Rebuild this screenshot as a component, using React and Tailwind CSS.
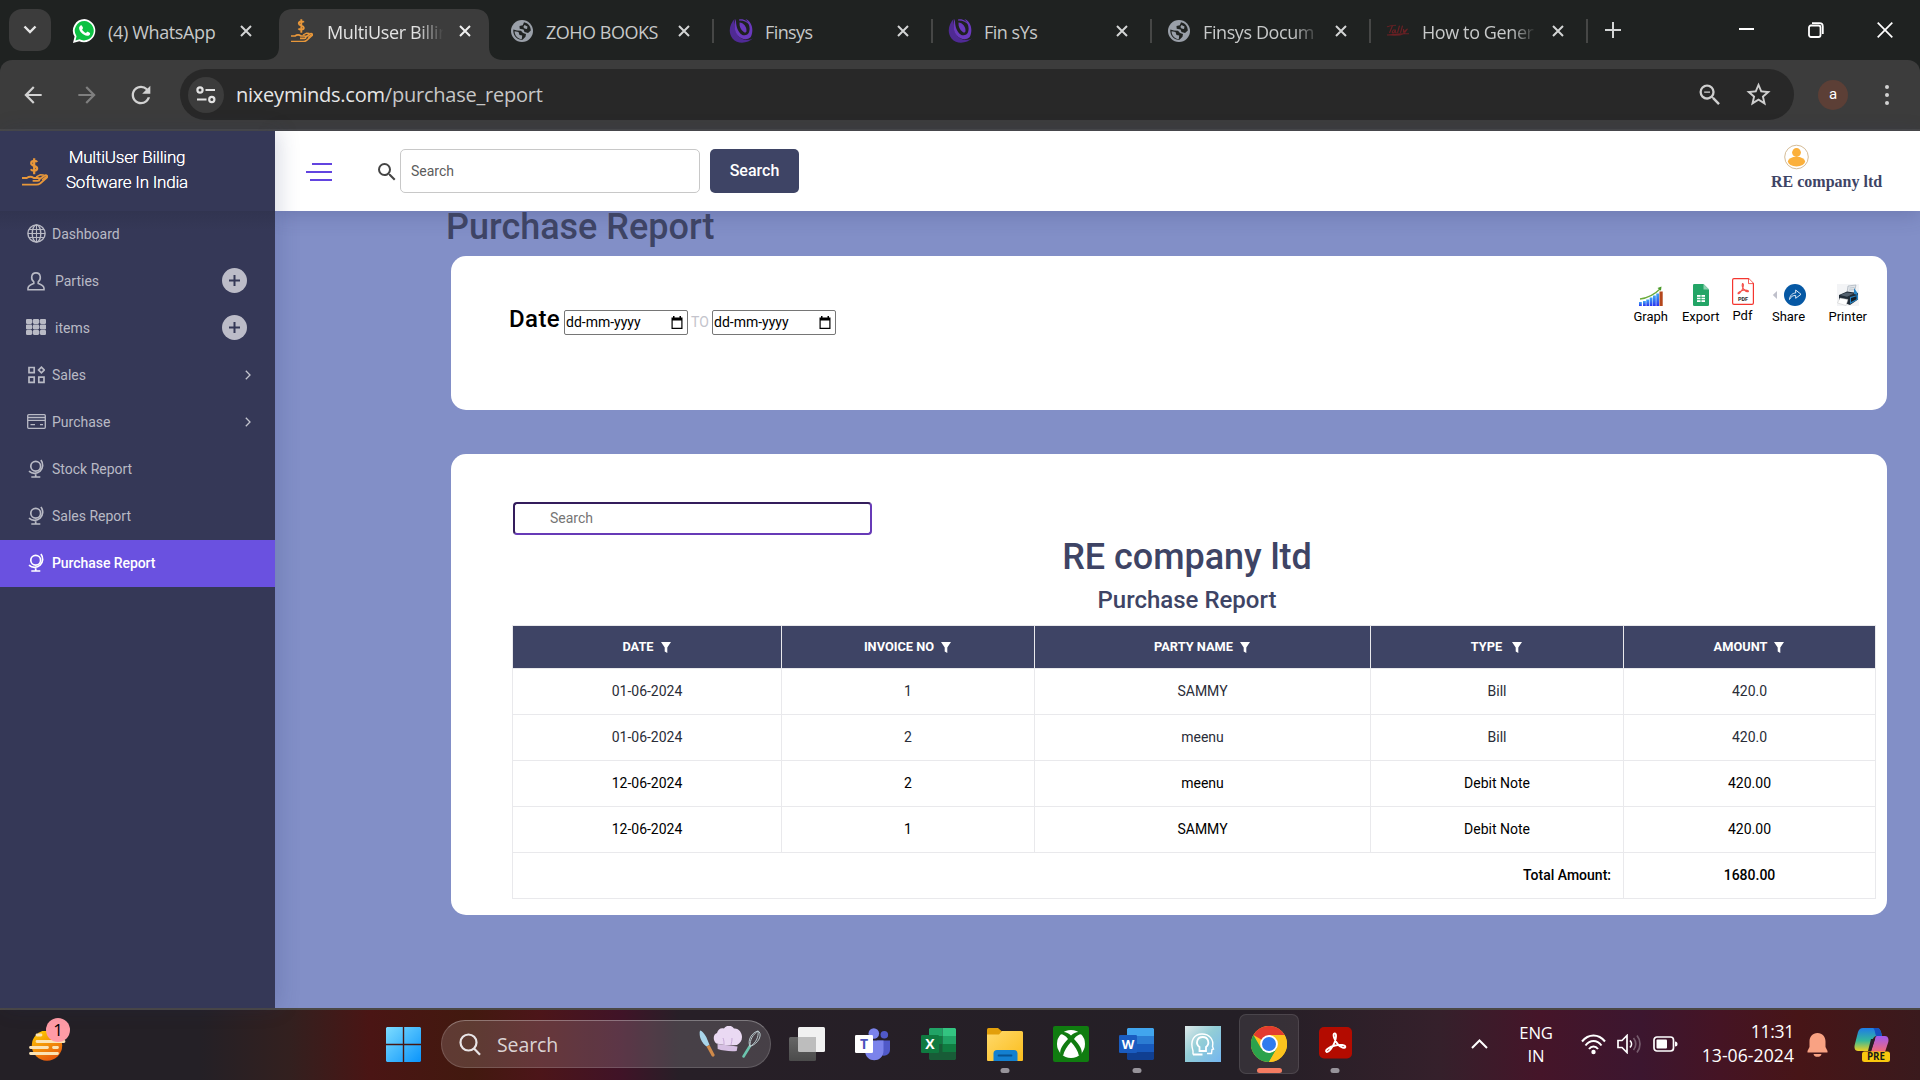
import React from "react";
import { MdSearch, MdRefresh, MdArrowBack, MdArrowForward, MdStarBorder, MdZoomOut } from "react-icons/md";

const SEGOE = "font-['Open_Sans',sans-serif]";

/* ---------- favicons ---------- */

function WhatsAppIcon() {
  return (
    <svg width="25" height="26" viewBox="0 0 25 26" className="block">
      <path d="M12.5 1A11.6 11.6 0 0 0 2.6 18.6L1 25l6.3-1.7A11.6 11.6 0 1 0 12.500 1Z" fill="#fff" />
      <path d="M12.500 3A9.700 9.700 0 0 0 4.500 18.200l-1 4.200 4.100-1.100A9.700 9.700 0 1 0 12.500 3Z" fill="#0dc143" />
      <path d="M8.600 7.600c.5-.4 1.200-.3 1.500.3l.8 1.700c.2.500.1.800-.3 1.300l-.5.600c.9 1.700 2.100 2.800 3.900 3.500l.9-1c.3-.3.600-.4 1-.2l1.700.9c.5.300.6.600.5 1.100-.3 1.500-1.600 2.200-3 2-4.100-.7-7.700-4.100-8-7.600 0-1 .6-2 1.500-2.600Z" fill="#fff" />
    </svg>
  );
}

function EarthIcon() {
  return (
    <svg width="22" height="22" viewBox="0 0 22 22" className="ml-[1px] block">
      <circle cx="11" cy="11" r="11" fill="#9aa0a9" />
      <path d="M13 2.300C17 3 19.800 6.500 19.800 10.500L17 13l-3.500-1-1-2.500-3.800-.8L8.500 6l3.300-.7Z" fill="#202322" />
      <path d="M2.300 9.500 6 10.500l4 .3 2 2.200 3 1-.5 2.800-3 3C6 20.300 1.800 15.500 2.300 9.500Z" fill="#202322" />
      <path d="M3.600 11.200 7.500 12l1 3 2.700.5-.4 3.500C7 19 3.500 15.700 3.600 11.200ZM13.500 5l3 1.500-.5 2.500-2.500-.5-1.200-1.500Z" fill="#9aa0a9" />
    </svg>
  );
}

function FinsysIcon() {
  return (
    <svg width="24" height="25" viewBox="0 0 24 25" className="block">
      <path d="M5.500 1C1 6-1.500 14 3.500 20.500 9 27 19.500 25 24 20.200c-4 2.300-10.300 2.500-14.500-2C5.300 13.600 5 7 5.500 1Z" fill="#4f2a94" />
      <path d="M7 .8C4.500 6 5 13 8.800 17.600c4 4.500 9.600 4.600 12.800 1.700C25 13 23.500 3.500 16.500 1c3.500 4 5 9 3.600 13-1.300 3.500-5.600 4.600-8.800 1.400C7.800 12 6.800 6 7 .8Z" fill="#6a39bd" />
      <path d="M10.500 4.500c4 0 7.500 4.500 7 8.800-.4 1.400-1.600 1.600-2.700.7-3-2-4.600-5.500-4.300-9.500Z" fill="#6a39bd" />
      <path d="M10 1.500c4-1.300 9 1.500 11.300 6C18.500 4 14.500 2.200 10 2.400Z" fill="#6a39bd" />
    </svg>
  );
}

function TallyIcon() {
  return (
    <svg width="24" height="13" viewBox="0 0 24 16" preserveAspectRatio="none" className="block" fill="none" stroke="#6b2024" strokeWidth="1.200">
      <path d="M1 3.500C5 1 8 2 10 1.500M6.500 2 3.500 11M8.500 7c-2 0-3 4-1.500 4s2-2 2.500-4c-.5 3 0 4 1 3.500M13.500 2 11.500 11M16.500 2l-2 9M17.500 6l0 4 4-4-3.500 6c-6 3-12 1.500-17 1.500 7-1 14-2 22-1.500" />
    </svg>
  );
}

function MoneyHand({ size = 22 }) {
  return (
    <svg width={size} height={size * 1.09} viewBox="0 0 22 24" className="block" fill="none" stroke="#e8973a">
      <path d="M12.800 3.400C12 2 7.800 2 7.800 4.500c0 2.700 5 1.600 5 4.300 0 2.400-4.300 2.400-5.300.7M10.300.3v13.500" strokeWidth="1.900" />
      <path d="M0 17h4c2-1.400 4-1.400 6 0h3.500c1.800 0 1.800 2.400 0 2.400H9M14.500 18l4.800-3.200c1.600-.8 2.800.8 1.500 2l-5.200 4.600c-1 .8-2 1.200-3.400 1.200H0" strokeWidth="1.600" />
      <path d="m12 16 3.500-1.800 3 .2M17 18.500l4-3" strokeWidth="1.300" />
    </svg>
  );
}

/* ---------- browser ---------- */

function CloseX({ color = "#d3d5d5" }) {
  return (
    <svg width="12" height="12" viewBox="0 0 12 12" stroke={color} strokeWidth="2" className="block">
      <path d="m1 1 10 10M11 1 1 11" />
    </svg>
  );
}

const TABS = [
  { title: "(4) WhatsApp", icon: <WhatsAppIcon />, spacing: "tracking-[-0.35px]" },
  { title: "MultiUser Billin", icon: <MoneyHand />, active: true, fade: true, spacing: "tracking-[-0.35px]" },
  { title: "ZOHO BOOKS", icon: <EarthIcon />, sep: true, spacing: "tracking-[-0.5px]" },
  { title: "Finsys", icon: <FinsysIcon />, sep: true, spacing: "tracking-[-0.6px]" },
  { title: "Fin sYs", icon: <FinsysIcon />, sep: true, spacing: "tracking-[-0.5px]" },
  { title: "Finsys Docum", icon: <EarthIcon />, sep: true, fade: true, spacing: "tracking-[-0.4px]" },
  { title: "How to Gener", icon: <TallyIcon />, sep: true, fade: true, narrow: true, spacing: "tracking-[-0.4px]" },
];

function Tab({ title, icon, active, sep, fade, narrow, spacing }) {
  return (
    <div className={`relative flex h-[60px] shrink-0 pt-[9px] ${narrow ? "w-[217px]" : "w-[219px]"}`}>
      {active && (
        <svg width="238" height="51" viewBox="0 0 238 51" className="absolute -left-[14px] top-[9px]">
          <path d="M0 51c9 0 14-5 14-13V14C14 5 19 0 28 0h182c9 0 14 5 14 14v24c0 8 5 13 14 13Z" fill="#3c3c3c" />
        </svg>
      )}
      <div className="relative flex h-[44px] w-full items-center">
        <div className="-mt-[1px] flex w-[48px] shrink-0 pl-[12px]">{icon}</div>
        <div
          className={`shrink-0 whitespace-nowrap pt-px text-[18px] leading-[26px] ${narrow ? "w-[117px]" : "w-[119px]"} ${
            fade ? "[mask-image:linear-gradient(to_right,black_76%,transparent_98%)]" : ""
          } ${active ? "text-[#e3e3e3]" : "text-[#c7c9c9]"} ${spacing}`}
        >
          {title}
        </div>
        <div className="ml-[13px]">
          <CloseX color={active ? "#f0f0f0" : "#d3d5d5"} />
        </div>
        {sep && <div className="absolute right-[3px] top-[10px] h-[24px] w-[2px] bg-[#464746]" />}
      </div>
    </div>
  );
}

function TabStrip() {
  return (
    <div className="flex h-[60px] bg-[#1f2221]">
      <div className="ml-[9px] mr-[9px] mt-[9px] flex h-[42px] w-[42px] items-center justify-center rounded-[13px] bg-[#3c3c3c]">
        <svg width="14" height="10" viewBox="0 0 14 10" fill="none" stroke="#e6e6e6" strokeWidth="2.400">
          <path d="m1.500 1.500 5.500 5.500 5.500-5.500" />
        </svg>
      </div>
      {TABS.map((t, i) => (
        <Tab key={i} {...t} />
      ))}
      <svg width="16" height="16" viewBox="0 0 16 16" stroke="#d3d5d5" strokeWidth="2" className="ml-[14px] mt-[22px]">
        <path d="M8 0v16M0 8h16" />
      </svg>
      <div className="ml-auto flex pr-[27px]">
        <div className="mt-[28px] h-[2px] w-[15px] bg-white" />
        <svg width="16" height="16" viewBox="0 0 16 16" fill="none" stroke="#fff" strokeWidth="1.800" className="ml-[54px] mt-[22px]">
          <rect x="1" y="3.500" width="11.500" height="11.500" rx="2" />
          <path d="M4 1.200h7.500c2 0 3.300 1.300 3.300 3.300v7.500" />
        </svg>
        <svg width="16" height="16" viewBox="0 0 16 16" stroke="#fff" strokeWidth="1.700" className="ml-[53px] mt-[22px]">
          <path d="m.7.7 14.600 14.600M15.300.7.7 15.300" />
        </svg>
      </div>
    </div>
  );
}

function Toolbar() {
  return (
    <div className="h-[71px] bg-[#1f2221]">
      <div className="flex h-[71px] items-center rounded-t-[12px] border-b-2 border-[#484848] bg-[#3c3c3c]">
        <MdArrowBack size={26} color="#d2d2d2" className="ml-[20px]" />
        <MdArrowForward size={26} color="#7f7f7f" className="ml-[28px]" />
        <MdRefresh size={28} color="#d2d2d2" className="ml-[27px]" />
        <div className="ml-[25px] flex h-[51px] w-[1614px] items-center rounded-full bg-[#282828]">
          <div className="ml-[8px] flex size-[36px] items-center justify-center rounded-full bg-[#3c3c3c]">
            <svg width="20" height="18" viewBox="0 0 20 18" fill="none" stroke="#e3e3e3" strokeWidth="2.200">
              <circle cx="4" cy="4" r="2.600" />
              <path d="M9.500 4H19M1 13.500h9.500" />
              <circle cx="15.800" cy="13.500" r="2.600" />
            </svg>
          </div>
          <div className="ml-[12px] pt-px text-[20px] leading-[28px] tracking-[-0.23px] text-[#e6e6e6]">
            nixeyminds.com<span className="text-[#c7c7c7]">/purchase_report</span>
          </div>
          <MdZoomOut size={28} color="#cfcfcf" className="ml-auto mr-[20px]" />
          <MdStarBorder size={29} color="#cfcfcf" className="mr-[21px]" />
        </div>
        <div className="ml-[24px] flex size-[30px] items-center justify-center rounded-full bg-[#5c3f36] font-[Roboto] text-[15px] text-white">a</div>
        <div className="ml-[37px] flex flex-col gap-[4px]">
          <div className="size-[4px] rounded-full bg-[#d2d2d2]" />
          <div className="size-[4px] rounded-full bg-[#d2d2d2]" />
          <div className="size-[4px] rounded-full bg-[#d2d2d2]" />
        </div>
      </div>
    </div>
  );
}

/* ---------- sidebar ---------- */

const GlobeIcon = () => (
  <svg width="19" height="19" viewBox="0 0 19 19" fill="none" stroke="currentColor" strokeWidth="1.400" className="-mt-[2px]">
    <circle cx="9.500" cy="9.500" r="8.600" />
    <ellipse cx="9.500" cy="9.500" rx="4.300" ry="8.600" />
    <path d="M9.500 1v17M1 9.500h17M2 5.500h15M2 13.500h15" strokeWidth="1.100" />
  </svg>
);
const PersonIcon = () => (
  <svg width="18" height="19" viewBox="0 0 18 19" fill="none" stroke="currentColor" strokeWidth="1.600" className="-mt-[1px]">
    <path d="M6.800 9.800C3.700 7.500 3.700.9 9 .9s5.300 6.600 2.200 8.900v1.700c2 .8 5.800 2.200 5.800 4.800v1.500H1v-1.500c0-2.600 3.800-4 5.800-4.800Z" />
  </svg>
);
const GridIcon = () => (
  <svg width="20" height="16" viewBox="0 0 20 16" fill="currentColor" className="-mt-[4px]">
    {[0, 5.500, 11].map((y) => [0, 7, 14].map((x) => <rect key={`${x}-${y}`} x={x - 0.2} y={y} width="6.400" height="4.900" rx="1.400" />))}
  </svg>
);
const CategoryIcon = () => (
  <svg width="17" height="18" viewBox="0 0 17 18" fill="none" stroke="currentColor" strokeWidth="1.700" className="-mt-[1px]">
    <path d="M1 1.500h5.200v5.200H1ZM1 11.200h5.200v5.200H1ZM10.800 11.200H16v5.200h-5.200ZM13.400 1.200l2.800 2.800-2.800 2.800-2.800-2.800Z" />
  </svg>
);
const CardIcon = () => (
  <svg width="19" height="15" viewBox="0 0 19 15" fill="none" stroke="currentColor" strokeWidth="1.300" className="-mt-[2px]">
    <rect x=".7" y=".7" width="17.600" height="13.600" rx="1" />
    <path d="M1 3.500h17M1 6.300h17M3.500 10.700H8M13 10.700h3" />
  </svg>
);
const StandIcon = () => (
  <svg width="17" height="19" viewBox="0 0 17 19" fill="none" stroke="currentColor" strokeWidth="1.700" className="-mt-[2px]">
    <circle cx="7.700" cy="7.300" r="4.900" />
    <path d="M12.900 1A8.200 8.200 0 0 1 1 12.200M7.700 15.200V18M3.300 18h9" />
  </svg>
);

const MENU = [
  { label: "Dashboard", Icon: GlobeIcon },
  { label: "Parties", Icon: PersonIcon, plus: true },
  { label: "items", Icon: GridIcon, plus: true },
  { label: "Sales", Icon: CategoryIcon, arrow: true },
  { label: "Purchase", Icon: CardIcon, arrow: true },
  { label: "Stock Report", Icon: StandIcon },
  { label: "Sales Report", Icon: StandIcon },
  { label: "Purchase Report", Icon: StandIcon, active: true },
];

function Sidebar() {
  return (
    <aside className="relative z-10 w-[275px] shrink-0 bg-[#353857] shadow-[4px_0_20px_rgba(40,50,100,0.18)]">
      <div className="flex h-[80px] items-center">
        <div className="ml-[22px] mt-[2px] w-[26px]">
          <MoneyHand size={26} />
        </div>
        <div className="ml-[14px] mt-[-2px] w-[130px] text-center font-[Roboto] text-[17px] font-light leading-[25px] tracking-[-0.2px] text-white [text-shadow:0_0_.5px_#fff]">
          MultiUser Billing
          <br />
          Software In India
        </div>
      </div>
      <nav className="bg-linear-to-b from-[#313450] via-[#353857] via-[5%] to-[#353857] font-[Roboto] text-[14px]">
        {MENU.map(({ label, Icon, plus, arrow, active }) => (
          <div key={label} className={`flex h-[47px] items-center ${active ? "bg-[#6a51e0] font-medium text-white" : "text-[#b9bac5]"}`}>
            <div className="ml-[26px] flex w-[20px] justify-center">
              <Icon />
            </div>
            <div className={plus ? "ml-[9px]" : active ? "ml-[6px] tracking-[-0.07px]" : "ml-[6px]"}>{label}</div>
            {plus && (
              <div className="-mt-[2px] ml-auto mr-[28px] flex size-[25px] items-center justify-center rounded-full bg-[#bcbcc8]">
                <svg width="11" height="11" viewBox="0 0 11 11" stroke="#353857" strokeWidth="2">
                  <path d="M5.500 0v11M0 5.500h11" />
                </svg>
              </div>
            )}
            {arrow && (
              <svg width="6" height="10" viewBox="0 0 6 10" fill="none" stroke="#c3c4ce" strokeWidth="1.300" className="-mt-[1px] ml-auto mr-[24px]">
                <path d="m.8.8 4.200 4.200L.8 9.200" />
              </svg>
            )}
          </div>
        ))}
      </nav>
    </aside>
  );
}

/* ---------- page ---------- */

function PageHeader() {
  return (
    <header className="relative flex h-[80px] items-center bg-white font-[Roboto] shadow-[0_4px_18px_rgba(50,60,110,0.25)]">
      <div className="ml-[31px] mt-[1px] flex w-[26px] flex-col items-end gap-[6px]">
        <div className="h-[2px] w-[20px] bg-[#6244e0]" />
        <div className="h-[2px] w-[26px] bg-[#6244e0]" />
        <div className="h-[2px] w-[22px] bg-[#6244e0]" />
      </div>
      <MdSearch size={24} color="#454545" className="ml-[43px] mt-[2px]" />
      <div className="ml-[1px] flex h-[44px] w-[300px] items-center rounded-[5px] border border-[#c8c8c8] pl-[10px] text-[14px] text-[#5c5c5c]">Search</div>
      <div className="ml-[10px] flex h-[44px] w-[89px] items-center justify-center rounded-[5px] bg-[#3e4465] text-[16px] font-medium text-white">Search</div>
      <div className="-mt-[4px] ml-auto mr-[38px] flex w-[111px] flex-col font-['Liberation_Serif',serif]">
        <svg width="25" height="26" viewBox="0 0 25 26" className="ml-[13px]">
          <circle cx="12.500" cy="13" r="11.800" fill="#fff" stroke="#c9a97b" strokeWidth=".8" />
          <circle cx="12.500" cy="8.500" r="4.400" fill="#fbb03b" />
          <ellipse cx="12.500" cy="17.600" rx="8.600" ry="4.800" fill="#fbb03b" />
        </svg>
        <div className="whitespace-nowrap text-[16px] font-bold leading-[24px] text-[#3e4465]">RE company ltd</div>
      </div>
    </header>
  );
}

function DateField() {
  return (
    <div className="flex h-[25px] w-[124px] items-center justify-between rounded-[2px] border border-[#767676] pl-[1px] pr-[4px] text-[14px] text-black">
      <span>dd-mm-yyyy</span>
      <svg width="12" height="13" viewBox="0 0 12 13">
        <path d="M2 0h1.500v1.500h5V0H10v1.500h1.500V13H.5V1.500H2ZM1.700 4.500v7.300h8.600V4.500Z" fill="#000" fillRule="evenodd" />
      </svg>
    </div>
  );
}

const GraphIcon = () => (
  <svg width="24" height="20" viewBox="0 0 24 20">
    <defs>
      <linearGradient id="bar" x1="0" y1="0" x2="0" y2="1">
        <stop offset="0" stopColor="#3fa9f5" />
        <stop offset="1" stopColor="#2a35f0" />
      </linearGradient>
    </defs>
    {[[0, 4], [4, 5], [7.300, 6.500], [10.700, 8.500], [14, 10.500], [17.300, 12.500]].map(([x, h]) => (
      <rect key={x} x={x} y={20 - h} width="2.800" height={h} fill="url(#bar)" />
    ))}
    <rect x="20.500" y="5.500" width="3.200" height="14.500" fill="#b4471d" />
    <path d="M1 13C9 12 15 9 21 3" fill="none" stroke="#6aab3a" strokeWidth="1.300" />
    <path d="m18.500 2 4-1.500-.5 4.300Z" fill="#4a9a2a" />
  </svg>
);
const SheetsIcon = () => (
  <svg width="16" height="22" viewBox="0 0 16 22">
    <path d="M1.300 0H10.500L16 5.500V20.700Q16 22 14.700 22H1.300Q0 22 0 20.700V1.300Q0 0 1.300 0Z" fill="#23a566" />
    <path d="M10.500 0 16 5.500H10.500Z" fill="#8fd1b1" />
    <path d="M4 11h8v7H4Z" fill="#fff" />
    <path d="M4 13.300h8M4 15.700h8M8 11v7" stroke="#23a566" strokeWidth=".9" />
  </svg>
);
const PdfIcon = () => (
  <svg width="22" height="27" viewBox="0 0 22 27">
    <path d="M2 .6H16.500L21.400 5.600V25Q21.400 26.400 20 26.400H2Q.6 26.400.6 25V2Q.6.6 2 .6Z" fill="#fff" stroke="#f4362f" strokeWidth="1.200" />
    <path d="M16.500.6V5.600H21.400" fill="#fff" stroke="#f4362f" strokeWidth=".8" />
    <path d="M10.500 5.500c1.500 0 1 4-.5 6.500s-3.500 4.500-4 3.500 3-2.800 5.500-3.200 5 .2 5 1-2 .6-3.500-.8S9.500 8 10.500 5.500Z" fill="none" stroke="#f4514b" strokeWidth="1.100" />
    <text x="11" y="23.300" textAnchor="middle" fontSize="5.500" fontWeight="800" fontFamily="Roboto" fill="#333">PDF</text>
  </svg>
);
const ShareIcon = () => (
  <svg width="34" height="22" viewBox="0 0 34 22">
    <path d="M5 7v8L.8 11Z" fill="#bfc0cb" />
    <circle cx="23" cy="11" r="11" fill="#0658a4" />
    <path d="M17.500 15.500c.3-4 3-6.500 6.200-6.500V6l5.300 4.300-5.300 4V11.500c-2.700-.2-4.700 1-6.200 4Z" fill="none" stroke="#dfeaf5" strokeWidth="1" strokeLinejoin="round" />
  </svg>
);
const PrinterIcon = () => (
  <svg width="22" height="22" viewBox="0 0 22 22">
    <path d="M0 0h22v22H0Z" fill="#f3f4f6" />
    <path d="m11 2 8-1-2 9-7-1Z" fill="#e2e6ea" stroke="#9aa5b0" strokeWidth=".6" />
    <path d="m12.500 4 5-.5M12 6l5-.3" stroke="#9aa5b0" strokeWidth=".5" />
    <path d="m2 11 8-3.500 11 1.500v6.500L13 21l-11-4Z" fill="#202b36" />
    <path d="m17 4 3.500 5v2L17 10ZM13 13l8-2v4.500L13 20Z" fill="#2583c4" />
    <path d="m14 14 5.500-1.800v3L14 18Z" fill="#141c24" />
    <path d="m3 14 8 1.500-2 6L.5 19Z" fill="#fff" stroke="#bbb" strokeWidth=".4" />
    <path d="m3 11 7-2.500 7 1-7 3.200Z" fill="#52606d" />
  </svg>
);

function Action({ label, children, className = "" }) {
  return (
    <div className={`flex flex-col items-center ${className}`}>
      {children}
      <span className="mt-[2px] text-[13px] leading-[18px] text-black">{label}</span>
    </div>
  );
}

function FilterCard() {
  return (
    <section className="ml-[176px] h-[154px] w-[1436px] rounded-[15px] bg-white">
      <div className="flex">
        <div className="ml-[58px] mt-[47px] flex items-end">
          <span className="w-[55px] text-[24px] font-medium leading-[32px] tracking-[0.4px] text-black">Date</span>
          <DateField />
          <span className="w-[24px] pb-[2px] text-center text-[14px] text-[#c4c4cc]">TO</span>
          <DateField />
        </div>
        <div className="ml-auto mr-[20px] mt-[24px] flex h-[46px] items-end">
          <Action label="Graph"><GraphIcon /></Action>
          <Action label="Export" className="ml-[14px]"><SheetsIcon /></Action>
          <Action label="Pdf" className="mb-[1px] ml-[12px]"><PdfIcon /></Action>
          <Action label="Share" className="ml-[18px]"><ShareIcon /></Action>
          <Action label="Printer" className="ml-[23px]"><PrinterIcon /></Action>
        </div>
      </div>
    </section>
  );
}

const Funnel = () => (
  <svg width="10" height="11" viewBox="0 0 10 11" fill="#fff" className="inline-block align-[-2px]">
    <path d="M0 0h10L6.300 5.500V11L3.700 9.500V5.500Z" />
  </svg>
);

const HEADS = [
  ["DATE", "ml-[7px]"],
  ["INVOICE NO", "ml-[7px]"],
  ["PARTY NAME", "ml-[7px]"],
  ["TYPE", "ml-[10px]"],
  ["AMOUNT", "ml-[7px]"],
];
const ROWS = [
  ["01-06-2024", "1", "SAMMY", "Bill", "420.0"],
  ["01-06-2024", "2", "meenu", "Bill", "420.0"],
  ["12-06-2024", "2", "meenu", "Debit Note", "420.00"],
  ["12-06-2024", "1", "SAMMY", "Debit Note", "420.00"],
];

function ReportCard() {
  return (
    <section className="ml-[176px] mt-[44px] h-[461px] w-[1436px] overflow-hidden rounded-[15px] bg-white">
      <div className="ml-[62px] mt-[48px] flex h-[33px] w-[359px] items-center rounded-[4px] border-2 border-b-[#673ab7] border-l-[#341d5c] border-r-[#673ab7] border-t-[#341d5c] pl-[35px] text-[14px] text-[#757575]">
        Search
      </div>
      <div className="ml-[61px] w-[1350px] text-center font-medium text-[#3e4465]">
        <h1 className="pt-px text-[36px] leading-[43px] tracking-[-0.05px]">RE company ltd</h1>
        <h2 className="mt-[7px] text-[24px] leading-[29px]">Purchase Report</h2>
      </div>
      <table className="ml-[61px] mt-[10px] w-[1364px] table-fixed border-collapse text-center text-[14px]">
        <colgroup>
          <col className="w-[269px]" />
          <col className="w-[253px]" />
          <col className="w-[336px]" />
          <col className="w-[253px]" />
          <col className="w-[252px]" />
        </colgroup>
        <thead>
          <tr className="h-[43px] bg-[#3e4465] text-[12.800px] text-white">
            {HEADS.map(([h, gap]) => (
              <th key={h} className="border border-[#e9e9ec] p-0 pr-[1px] font-bold">
                {h}
                <span className={gap}><Funnel /></span>
              </th>
            ))}
          </tr>
        </thead>
        <tbody>
          {ROWS.map((r, i) => (
            <tr key={i} className={`h-[46px] ${i < 2 ? "text-[#2a2d38]" : "text-black"}`}>
              {r.map((c, j) => (
                <td key={j} className="border border-[#e9e9ec] p-0">{c}</td>
              ))}
            </tr>
          ))}
          <tr className="h-[46px] font-medium text-black">
            <td colSpan={4} className="border border-[#e9e9ec] p-0 pr-[12px] text-right">Total Amount:</td>
            <td className="border border-[#e9e9ec] p-0">1680.00</td>
          </tr>
        </tbody>
      </table>
    </section>
  );
}

/* ---------- taskbar ---------- */

const WeatherIcon = () => (
  <div className="relative h-[52px] w-[42px]">
    <svg width="38" height="38" viewBox="0 0 38 38" className="absolute left-0 top-[13px]">
      <defs>
        <linearGradient id="sun" x1="0" y1="0" x2=".5" y2="1">
          <stop offset="0" stopColor="#ffd400" />
          <stop offset="1" stopColor="#e85d0c" />
        </linearGradient>
      </defs>
      <circle cx="18" cy="14.500" r="15.200" fill="url(#sun)" />
      <path d="M8 4h4M8 10.500h27M1.500 16.500h17M24.500 16.500h4M1.500 22.500h27" stroke="#fbe3b4" strokeWidth="2.800" strokeLinecap="round" />
    </svg>
    <div className="absolute left-[17px] top-0 flex size-[24px] items-center justify-center rounded-full bg-[#ff9ba6] text-[17px] text-black">1</div>
  </div>
);

const WindowsIcon = () => (
  <svg width="35" height="35" viewBox="0 0 35 35">
    <defs>
      <linearGradient id="win" gradientUnits="userSpaceOnUse" x1="0" y1="0" x2="35" y2="35">
        <stop offset="0" stopColor="#7ddcff" />
        <stop offset="1" stopColor="#0a94fb" />
      </linearGradient>
    </defs>
    <path d="M1 0h15.800v16.800H0V1ZM18.200 0H34l1 1v15.800H18.200ZM0 18.200h16.800V35H1L0 34ZM18.200 18.200H35V34l-1 1H18.200Z" fill="url(#win)" />
  </svg>
);

const ChefIcon = () => (
  <svg width="66" height="36" viewBox="0 0 66 36">
    <path d="M2 4.500c4 1 7 7.500 9.500 14.500L8.500 20.500C3.500 17 .5 10 2 4.500Z" fill="#a9d5ea" />
    <path d="m8.500 20.500 3-1.500 5 9.500c.6 2-1.800 3-2.800 1.500Z" fill="#d08a4a" />
    <path d="m19.500 18 20 2.500-.8 4.500c-6 .8-14-.3-19-2Z" fill="#d6bfe3" />
    <path d="M18.500 17.500c-4-3-3.500-9.500.5-10.500 1-4 4-5.500 7-4.500 2-3.500 7.500-4 10 0 5-.5 8 4.500 8 8.500s-2 6-5 8c-7 .5-14 .3-20.500-1.500Z" fill="#ead9f3" />
    <path d="M25 12c1 2.500 1 4 1 6.500M34 12c0 3-.5 4.500-1 7" stroke="#c7a9d8" fill="none" />
    <path d="m52 20-6.500 10.500" stroke="#6cc4ae" strokeWidth="2.600" strokeLinecap="round" />
    <path d="M52 20.500C49 14 54 6.500 60 5c4.500 2 2 12-8 15.500Zm0 0C51.500 13.500 55.500 8 60 5c1 6-2.500 12.500-8 15.500Z" fill="none" stroke="#b8c8cc" strokeWidth="1" />
  </svg>
);

const TaskViewIcon = () => (
  <svg width="36" height="34" viewBox="0 0 36 34">
    <defs>
      <linearGradient id="tv" x1="0" y1="0" x2="0" y2="1">
        <stop offset="0" stopColor="#666" />
        <stop offset="1" stopColor="#4b4b4b" />
      </linearGradient>
    </defs>
    <rect x="9" y="0" width="27" height="25" rx="1.500" fill="#f1f1f1" />
    <rect x="0" y="10" width="27" height="24" rx="1.500" fill="url(#tv)" />
    <path d="M9 10h18v15H10.500Q9 25 9 23.500Z" fill="#bdbdbd" />
  </svg>
);

const Letter = ({ x, y, size, fill, children }) => (
  <text x={x} y={y} textAnchor="middle" fontFamily="Open Sans" fontWeight="700" fontSize={size} fill={fill}>{children}</text>
);

const TeamsIcon = () => (
  <svg width="35" height="33" viewBox="0 0 35 33">
    <circle cx="18.800" cy="5.500" r="5.300" fill="#7b83eb" />
    <circle cx="29.300" cy="6.800" r="3.800" fill="#5059c9" />
    <path d="M22 12.500h13v9c0 7-9 8-11 3Z" fill="#5059c9" />
    <path d="M10 12.500h18.500v10c0 13-18.500 13-18.500 0Z" fill="#7b83eb" />
    <rect x="0" y="7" width="18" height="18" rx="1.300" fill="#fff" />
    <Letter x="9" y="21" size="14" fill="#4b53bc">T</Letter>
  </svg>
);

const ExcelIcon = () => (
  <svg width="35" height="32" viewBox="0 0 35 32">
    <path d="M9 0h12.500v8H8V1Z" fill="#21a366" />
    <path d="M21.500 0H34l1 1v7H21.500Z" fill="#33c481" />
    <path d="M8 8h13.500v8H8Z" fill="#107c41" />
    <path d="M21.500 8H35v8H21.500Z" fill="#21a366" />
    <path d="M8 16h27v15l-1 1H9l-1-1Z" fill="#185c37" />
    <path d="M21.500 16H35v8H21.500Z" fill="#107c41" />
    <rect x="0" y="7" width="18" height="18" rx="1.300" fill="#0f7a40" />
    <Letter x="9" y="21" size="14" fill="#fff">X</Letter>
  </svg>
);

const WordIcon = () => (
  <svg width="35" height="32" viewBox="0 0 35 32">
    <path d="M9 0h25l1 1v7H8V1Z" fill="#41a5ee" />
    <path d="M8 8h27v8H8Z" fill="#2b7cd3" />
    <path d="M8 16h27v8H8Z" fill="#185abd" />
    <path d="M8 24h27v7l-1 1H9l-1-1Z" fill="#103f91" />
    <rect x="0" y="7" width="18" height="18" rx="1.300" fill="#1a5cc0" />
    <Letter x="9" y="20.800" size="13" fill="#fff">W</Letter>
  </svg>
);

const FolderIcon = () => (
  <svg width="36" height="33" viewBox="0 0 36 33">
    <defs>
      <linearGradient id="fold" x1="0" y1="0" x2="1" y2="1">
        <stop offset="0" stopColor="#ffd96b" />
        <stop offset="1" stopColor="#fbbd1c" />
      </linearGradient>
    </defs>
    <path d="M1.500 0H11l4 3.500V8H0V1.500Q0 0 1.500 0Z" fill="#e29f0b" />
    <path d="M0 6.500h12l3-3.500h19.500Q36 3 36 4.500V32q0 1-1 1H1Q0 33 0 32Z" fill="url(#fold)" />
    <path d="M6.500 33V25.500Q6.500 22 10 22H27Q30.500 22 30.500 25.500V33Z" fill="#1380d0" />
    <path d="M11.500 27.500h13" stroke="#075392" strokeWidth="1.800" strokeLinecap="round" />
  </svg>
);

const XboxIcon = () => (
  <svg width="36" height="36" viewBox="0 0 36 36">
    <rect width="36" height="36" rx="2" fill="#107c10" />
    <circle cx="18" cy="18" r="14" fill="#fff" />
    <path d="M8.500 6.500c3-1.200 6.500.5 9.500 3 3-2.500 6.500-4.200 9.500-3l2 2c-2.500-.8-5.500.5-8.500 4.500 5 5 9 11 7.500 15.500L26 30c-1-5-4-10-8-14-4 4-7 9-8 14l-2.500-1.500C6 24 10 18 15 13 12 9 9 7.700 6.500 8.500Z" fill="#107c10" />
  </svg>
);

const ProfileIcon = () => (
  <svg width="36" height="36" viewBox="0 0 36 36">
    <defs>
      <linearGradient id="pr" x1="0" y1="0" x2="1" y2="1">
        <stop offset="0" stopColor="#dfe9ea" />
        <stop offset=".45" stopColor="#92cdd6" />
        <stop offset="1" stopColor="#74b6f0" />
      </linearGradient>
    </defs>
    <rect width="36" height="36" fill="url(#pr)" />
    <path d="M8 28.500V25C4.500 14 9.500 8 17 8s12 5.500 10.500 12.500l1 2.500-1.500.5-.5 4H22" fill="none" stroke="#fff" strokeWidth="1.400" />
    <path d="M8 28.500h9.500M14.500 25v-4c-4.500-3.500-2.500-10 3.200-10s7.500 6.500 3.300 10v4Z" fill="none" stroke="#fff" strokeWidth="1.800" />
  </svg>
);

const ChromeIcon = () => (
  <svg width="36" height="36" viewBox="0 0 36 36">
    <circle cx="18" cy="18" r="18" fill="#fcc31e" />
    <path d="M18 18 2.400 9A18 18 0 0 1 33.600 9H18Z" fill="#e33b2e" />
    <path d="M2.400 9A18 18 0 0 0 18 36L25.800 22.500 18 18l-7.800 4.500Z" fill="#2ba24c" />
    <path d="M25.800 22.500 18 36A18 18 0 0 0 33.600 9H18Z" fill="#fcc31e" />
    <circle cx="18" cy="18" r="8.900" fill="#fff" />
    <circle cx="18" cy="18" r="7" fill="#2f7bee" />
  </svg>
);

const AcrobatIcon = () => (
  <svg width="33" height="32" viewBox="0 0 33 32">
    <rect width="33" height="31.500" rx="5" fill="#b30b00" />
    <path d="M15.500 6.500c2.300-.3 1.800 4.500 0 9-2 5-6 10.300-8 9.300-2-1.200 2.500-5 8.500-6.300 5.500-1.200 10.500-.7 10.300 1.500-.3 2-4.500.5-7.300-2.500-3-3.300-6-10.700-3.500-11Z" fill="none" stroke="#fff" strokeWidth="1.900" />
  </svg>
);

const CopilotIcon = () => (
  <svg width="36" height="35" viewBox="0 0 36 35">
    <defs>
      <linearGradient id="cpa" x1="0" y1="0" x2="0" y2="1">
        <stop offset="0" stopColor="#1e7be8" />
        <stop offset=".55" stopColor="#35b89a" />
        <stop offset="1" stopColor="#f0cf21" />
      </linearGradient>
      <linearGradient id="cpb" x1="0" y1="0" x2="0" y2="1">
        <stop offset="0" stopColor="#a05af0" />
        <stop offset="1" stopColor="#f46b72" />
      </linearGradient>
    </defs>
    <path d="M9 0h14c3 0 4 3 5 8h-5c-3 0-4 2-5 5l-3 10H4c-3 0-4-3-3.300-6L4 4C5 1.500 6.500 0 9 0Z" fill="url(#cpa)" />
    <path d="M19 0h4c3 0 4 3 5 8h-6c-1-3-1-7-3-8Z" fill="#1550c0" />
    <path d="M23 8h8c3 0 4 3 3.300 6L31 24H17l4-13c.5-2 1-3 2-3Z" fill="url(#cpb)" />
    <path d="M17 11h4l-4 12h-3Z" fill="#241f26" />
    <rect x="8" y="23.500" width="28" height="10.500" rx="2.500" fill="#f9c80e" />
    <Letter x="22" y="32.300" size="9.800" fill="#1a1a1a">PRE</Letter>
  </svg>
);

function TaskbarApp({ children, running }) {
  return (
    <div className="relative ml-[6px] flex h-[60px] w-[60px] items-center justify-center">
      {children}
      {running && <div className="absolute bottom-[1px] left-1/2 h-[5px] w-[9px] -translate-x-1/2 rounded-full bg-[#97939a]" />}
    </div>
  );
}

function Taskbar() {
  return (
    <footer className="flex h-[72px] items-center border-t-2 border-[#4b4845] bg-[linear-gradient(90deg,#242026_0,#242026_200px,#33201f_290px,#4a1514_370px,#42190f_470px,#4c1519_540px,#401327_620px,#271f27_680px,#241f26_1250px,#35202b_1440px,#451529_1540px,#3c162f_1640px,#451424_1720px,#471517_1800px,#3a1a1d_1920px)] pb-[2px] text-white">
      <div className="ml-[29px]"><WeatherIcon /></div>
      <div className="ml-[315px] mt-[1px]"><WindowsIcon /></div>
      <div className="ml-[20px] flex h-[48px] w-[330px] items-center rounded-full border border-white/15 border-t-white/30 bg-white/15">
        <svg width="22" height="23" viewBox="0 0 22 23" fill="none" stroke="#e9e5e7" strokeWidth="2.200" className="ml-[17px]">
          <circle cx="9.500" cy="9.500" r="8" />
          <path d="m15 15.500 6 6.200" />
        </svg>
        <span className="ml-[16px] pt-px text-[19.5px] tracking-[-0.1px] text-[#dbd3d4]">Search</span>
        <div className="ml-auto mr-[6px]"><ChefIcon /></div>
      </div>
      <TaskbarApp><TaskViewIcon /></TaskbarApp>
      <TaskbarApp><div className="-ml-[2px]"><TeamsIcon /></div></TaskbarApp>
      <TaskbarApp><div className="-ml-[1px]"><ExcelIcon /></div></TaskbarApp>
      <TaskbarApp running><FolderIcon /></TaskbarApp>
      <TaskbarApp><XboxIcon /></TaskbarApp>
      <TaskbarApp running><div className="-ml-[1px]"><WordIcon /></div></TaskbarApp>
      <TaskbarApp><ProfileIcon /></TaskbarApp>
      <div className="relative ml-[6px] flex size-[60px] items-center justify-center rounded-[7px] border border-white/10 bg-white/8">
        <ChromeIcon />
        <div className="absolute bottom-0 left-[17px] h-[5px] w-[25px] rounded-full bg-[#f47c62]" />
      </div>
      <TaskbarApp running><div className="-mt-[2px]"><AcrobatIcon /></div></TaskbarApp>
      <svg width="17" height="10" viewBox="0 0 17 10" fill="none" stroke="#fff" strokeWidth="2" className="ml-[106px]">
        <path d="m1 9 7.500-7.500L16 9" />
      </svg>
      <div className="ml-[28px] w-[40px] text-center text-[16.700px] leading-[23px] tracking-[-0.2px]">ENG<br />IN</div>
      <svg width="25" height="21" viewBox="0 0 25 21" fill="none" stroke="#fff" strokeWidth="2" className="ml-[25px]">
        <path d="M1 7.500C7.500-.5 17.500-.5 24 7.500M4.500 11.500c4.500-6 11.500-6 16 0M8 15c2.500-3.500 6.500-3.500 9 0" />
        <circle cx="12.500" cy="18" r="2.200" fill="#fff" stroke="none" />
      </svg>
      <svg width="25" height="20" viewBox="0 0 25 20" fill="none" stroke="#fff" strokeWidth="1.700" className="ml-[11px]">
        <path d="M1 6.500h4l5-5v17l-5-5H1ZM13 6.500c2 2 2 5 0 7" />
        <path d="M16.500 4c3 3.500 3 8.500 0 12M20 1.500c4 5 4 12 0 17" opacity=".3" />
      </svg>
      <svg width="25" height="16" viewBox="0 0 25 16" className="ml-[11px]">
        <rect x="1" y="1" width="19.500" height="14" rx="3" fill="none" stroke="#fff" strokeWidth="1.700" />
        <rect x="3.500" y="3.500" width="10.500" height="9" rx="1" fill="#fff" />
        <path d="M22 5.500q2.500 0 2.500 2.500T22 10.500Z" fill="#fff" />
      </svg>
      <div className="-mt-[2px] ml-auto w-[110px] whitespace-nowrap text-right text-[17.600px] leading-[24px]">
        <span className="tracking-[-0.3px]">11:31</span>
        <br />
        <span className="tracking-[0.05px]">13-06-2024</span>
      </div>
      <svg width="21" height="24" viewBox="0 0 21 24" fill="#f9a283" className="ml-[13px] mt-[2px]">
        <path d="M10.500 0c5 0 8 3.800 8 8.500V14l2 4v1.500H.5V18l2-4V8.500C2.500 3.800 5.500 0 10.500 0ZM6.500 21h8c-.5 3.800-7.500 3.800-8 0Z" />
      </svg>
      <div className="ml-[26px] mr-[30px] mt-[2px]"><CopilotIcon /></div>
    </footer>
  );
}

export default function App() {
  return (
    <div className={`flex h-[1080px] w-[1920px] flex-col overflow-hidden ${SEGOE}`}>
      <TabStrip />
      <Toolbar />
      <div className="flex h-[877px]">
        <Sidebar />
        <div className="flex w-[1645px] flex-col bg-[#828fc7]">
          <PageHeader />
          <main className="font-[Roboto]">
            <h1 className="relative ml-[171px] -mt-[5px] h-[50px] text-[36px] font-medium leading-[43px] text-[#3e4465]">Purchase Report</h1>
            <FilterCard />
            <ReportCard />
          </main>
        </div>
      </div>
      <Taskbar />
    </div>
  );
}
